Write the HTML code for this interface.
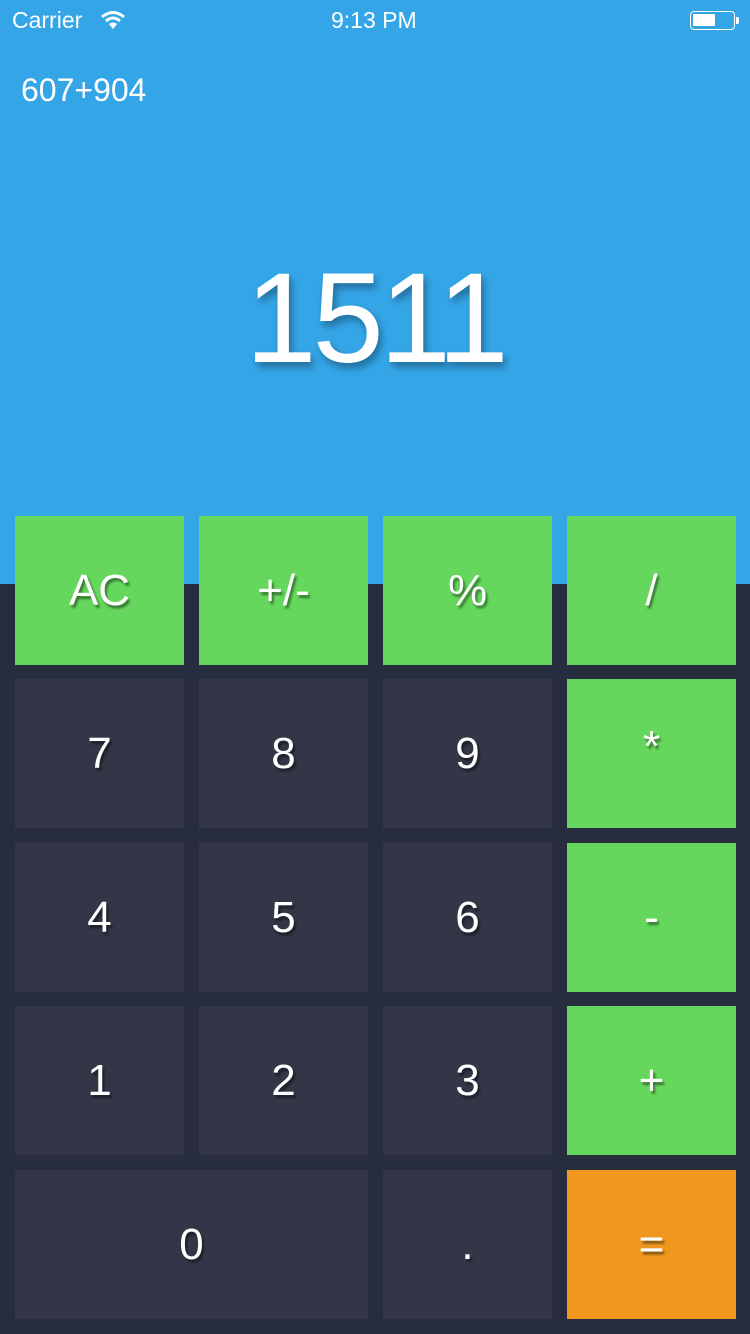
<!DOCTYPE html>
<html><head><meta charset="utf-8"><style>
*{margin:0;padding:0;box-sizing:border-box}
body{width:750px;height:1334px;background:#272c3e;font-family:"Liberation Sans",sans-serif;position:relative;overflow:hidden;color:#fff}
.top{position:absolute;left:0;top:0;width:750px;height:584px;background:#34a6e8}
.sb{position:absolute;top:7px;font-size:23px}
.expr{position:absolute;left:21px;top:72px;font-size:32px}
.res{position:absolute;left:0;width:750px;text-align:center;top:255px;line-height:1;font-size:128px;letter-spacing:-4px;text-shadow:3px 5px 8px rgba(0,0,0,.35)}
.k{position:absolute;width:169px;height:149px;background:#333647;display:flex;align-items:center;justify-content:center;font-size:44px;text-shadow:2px 3px 2px rgba(0,0,0,.45)}
.g{background:#65d75c}.o{background:#ef971f}
</style></head><body>
<div class="top"></div>
<div class="sb" style="left:12px">Carrier</div>
<svg style="position:absolute;left:100px;top:10px" width="26" height="20" viewBox="0 0 26 20"><path d="M2 7 Q13 -2 24 7" stroke="#fff" stroke-width="3" fill="none"/><path d="M6 11 Q13 5 20 11" stroke="#fff" stroke-width="3" fill="none"/><path d="M13 19 L9 14 Q13 11 17 14Z" fill="#fff"/></svg>
<div class="sb" style="left:331px">9:13 PM</div>
<div style="position:absolute;left:690px;top:11px;width:45px;height:19px;border:1.5px solid #fff;border-radius:4px"><div style="margin:2px;width:22px;height:12px;background:#fff;border-radius:1px"></div></div>
<div style="position:absolute;left:736px;top:17px;width:3px;height:7px;background:#fff;border-radius:0 2px 2px 0"></div>
<div class="expr">607+904</div>
<div class="res">1511</div>

<div class="k g" style="left:15px;top:516px">AC</div>
<div class="k g" style="left:199px;top:516px">+/-</div>
<div class="k g" style="left:383px;top:516px">%</div>
<div class="k g" style="left:567px;top:516px">/</div>

<div class="k" style="left:15px;top:679px">7</div>
<div class="k" style="left:199px;top:679px">8</div>
<div class="k" style="left:383px;top:679px">9</div>
<div class="k g" style="left:567px;top:679px;padding-bottom:14px">*</div>

<div class="k" style="left:15px;top:843px">4</div>
<div class="k" style="left:199px;top:843px">5</div>
<div class="k" style="left:383px;top:843px">6</div>
<div class="k g" style="left:567px;top:843px">-</div>

<div class="k" style="left:15px;top:1006px">1</div>
<div class="k" style="left:199px;top:1006px">2</div>
<div class="k" style="left:383px;top:1006px">3</div>
<div class="k g" style="left:567px;top:1006px">+</div>

<div class="k" style="left:15px;top:1170px;width:353px">0</div>
<div class="k" style="left:383px;top:1170px">.</div>
<div class="k o" style="left:567px;top:1170px">=</div>
</body></html>
